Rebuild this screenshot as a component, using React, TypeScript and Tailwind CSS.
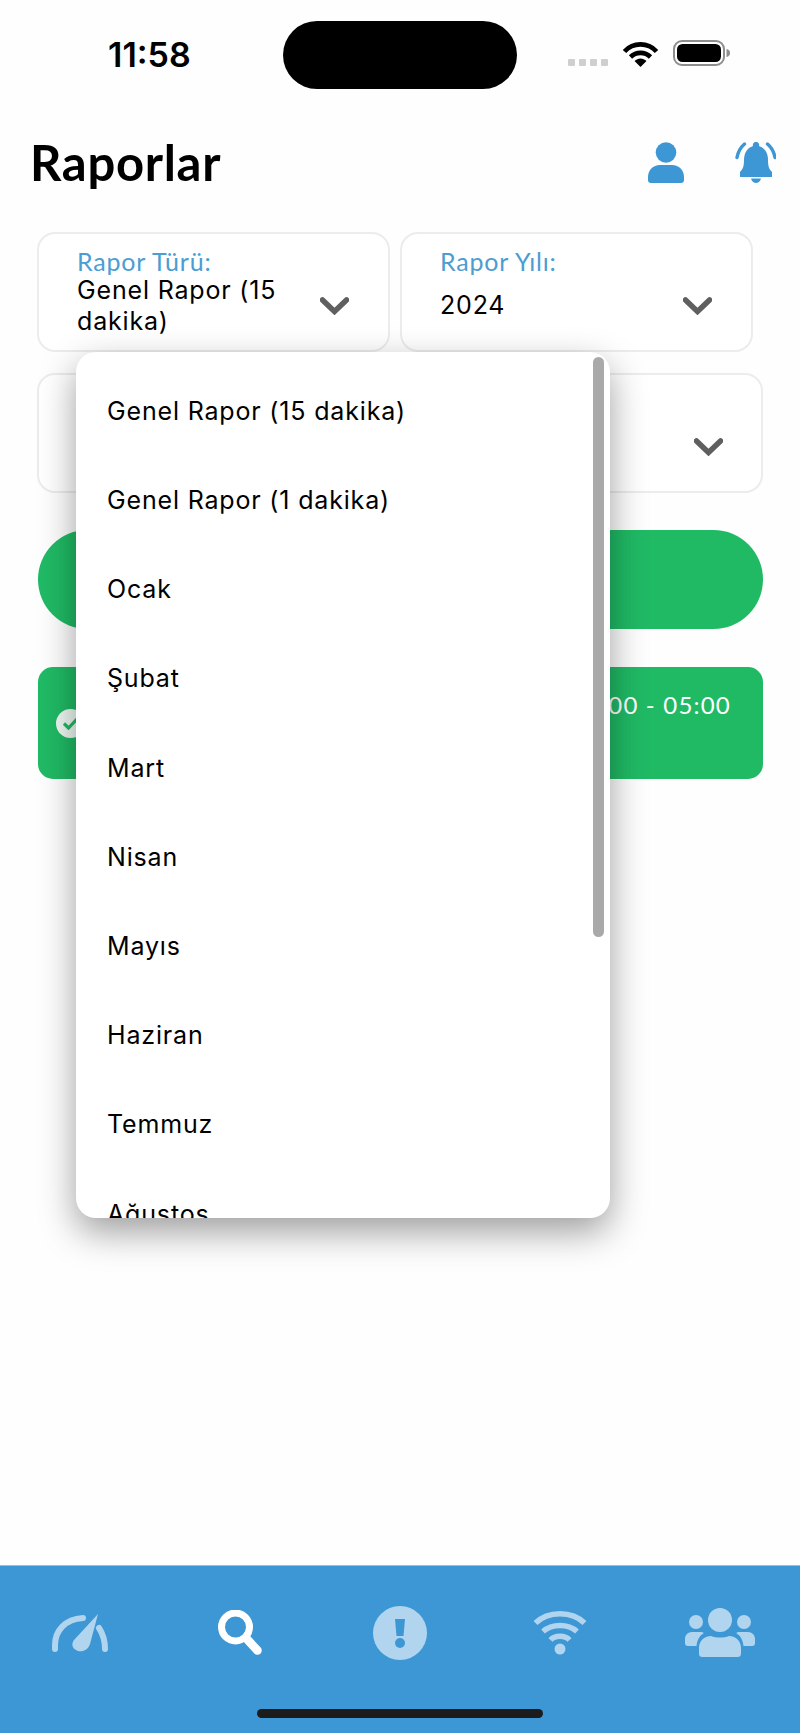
import React from 'react';

const months = [
  'Genel Rapor (15 dakika)',
  'Genel Rapor (1 dakika)',
  'Ocak',
  'Şubat',
  'Mart',
  'Nisan',
  'Mayıs',
  'Haziran',
  'Temmuz',
  'Ağustos',
];

const Chevron = () => (
  <svg width="29" height="18" viewBox="0 0 29 18" className="shrink-0 mt-[13px]">
    <path d="M2.5 3 L14.5 14.5 L26.5 3" fill="none" stroke="#5f5f5f" strokeWidth="5.5" strokeLinecap="round" />
  </svg>
);

const StatusBar = () => (
  <div className="h-[130px] flex items-start pt-[21px]">
    <div className="h-[68px] w-[175px] pl-[108px] flex items-center font-['Inter',sans-serif] text-[34px] font-semibold text-black leading-none whitespace-nowrap">
      11:58
    </div>
    <div className="ml-[108px] h-[68px] w-[234px] rounded-[34px] bg-black" />
    <div className="ml-[51px] mt-[38px] flex gap-[4px]">
      <div className="w-[7px] h-[7px] rounded-[1px] bg-[#cfcfcf]" />
      <div className="w-[7px] h-[7px] rounded-[1px] bg-[#cfcfcf]" />
      <div className="w-[7px] h-[7px] rounded-[1px] bg-[#cfcfcf]" />
      <div className="w-[7px] h-[7px] rounded-[1px] bg-[#cfcfcf]" />
    </div>
    <svg width="35" height="26" viewBox="0 0 35 26" className="ml-[15px] mt-[20px]">
      <path d="M1.5 10.5 C10 1 25 1 33.5 10.5" fill="none" stroke="#000" strokeWidth="4.6" />
      <path d="M7.5 16 C13 10.5 22 10.5 27.5 16" fill="none" stroke="#000" strokeWidth="4.6" />
      <path d="M11.5 20 C15 16.5 20 16.5 23.5 20 L17.5 26 Z" fill="#000" />
    </svg>
    <svg width="58" height="28" viewBox="0 0 58 28" className="ml-[15px] mt-[19px]">
      <rect x="1" y="1" width="50" height="24" rx="8" fill="none" stroke="#8e8e8e" strokeWidth="2" />
      <rect x="4" y="4" width="44" height="18" rx="5.5" fill="#000" />
      <path d="M53.5 9 C56 9.5 57 11 57 13 C57 15 56 16.5 53.5 17 Z" fill="#8e8e8e" />
    </svg>
  </div>
);

const UserIcon = () => (
  <svg width="36" height="41" viewBox="0 0 36 41">
    <circle cx="18" cy="10.5" r="10.3" fill="#3d97d5" />
    <path d="M12 23 H24 C31 23 36 28 36 35 V38 C36 40 35 41 33 41 H3 C1 41 0 40 0 38 V35 C0 28 5 23 12 23 Z" fill="#3d97d5" />
  </svg>
);

const BellIcon = () => (
  <svg width="41" height="41" viewBox="0 0 41 41">
    <path d="M21 0 a3 3 0 0 1 3 4 C30 6 33 11 33 18 C33 24 34 27 37 30 V35 H5 V30 C8 27 9 24 9 18 C9 11 12 6 18 4 A3 3 0 0 1 21 0 Z" fill="#3d97d5" />
    <path d="M16 36.5 H26 C25 40 23 41 21 41 C19 41 17 40 16 36.5 Z" fill="#3d97d5" />
    <path d="M9.5 2 C5.5 5.5 3 10 2 15.5" fill="none" stroke="#3d97d5" strokeWidth="3.4" strokeLinecap="round" />
    <path d="M32.5 2 C36.5 5.5 39 10 40 15.5" fill="none" stroke="#3d97d5" strokeWidth="3.4" strokeLinecap="round" />
  </svg>
);

const GaugeIcon = () => (
  <svg width="56" height="38" viewBox="0 0 56 38">
    <path d="M3 35 V31 C3 17 13 5 31 4" fill="none" stroke="#b1d5ef" strokeWidth="6" strokeLinecap="round" />
    <path d="M47 14 C51 20 53 26 53 35" fill="none" stroke="#b1d5ef" strokeWidth="6" strokeLinecap="round" />
    <path d="M46 0 L38 30 C36 36 31 38 26 37 C20 35 19 30 22 26 Z" fill="#b1d5ef" />
  </svg>
);

const SearchIcon = () => (
  <svg width="44" height="45" viewBox="0 0 44 45">
    <circle cx="17.5" cy="17" r="14" fill="none" stroke="#fff" strokeWidth="7" />
    <path d="M28 28 L39.5 40.5" stroke="#fff" strokeWidth="8.5" strokeLinecap="round" />
  </svg>
);

const AlertIcon = () => (
  <svg width="54" height="54" viewBox="0 0 54 54">
    <circle cx="27" cy="27" r="27" fill="#b1d5ef" />
    <path d="M22 13 H32 L30.5 30 H23.5 Z" fill="#3d97d5" />
    <circle cx="27" cy="37" r="5" fill="#3d97d5" />
  </svg>
);

const WifiIcon = () => (
  <svg width="54" height="45" viewBox="0 0 54 45">
    <path d="M2.5 13 C15 0.5 39 0.5 51.5 13" fill="none" stroke="#b1d5ef" strokeWidth="5.5" />
    <path d="M10 21.5 C19 13.5 35 13.5 44 21.5" fill="none" stroke="#b1d5ef" strokeWidth="5.5" />
    <path d="M17.5 30 C22 25 32 25 36.5 30" fill="none" stroke="#b1d5ef" strokeWidth="5.5" />
    <circle cx="27" cy="39" r="5.5" fill="#b1d5ef" />
  </svg>
);

const PeopleIcon = () => (
  <svg width="70" height="49" viewBox="0 0 70 49">
    <circle cx="35" cy="12" r="12" fill="#b1d5ef" />
    <circle cx="11" cy="14" r="7" fill="#b1d5ef" />
    <circle cx="59" cy="14" r="7" fill="#b1d5ef" />
    <path d="M26 28 C31 30 39 30 44 28 C51 28 56 33 56 40 V45 C56 48 55 49 52 49 H18 C15 49 14 48 14 45 V40 C14 33 19 28 26 28 Z" fill="#b1d5ef" />
    <path d="M7 24 H15 C17 24 18 24.5 19 25 C14 28 12 33 11.5 38 H3 C1 38 0 37 0 35 V31 C0 27 3 24 7 24 Z" fill="#b1d5ef" />
    <path d="M63 24 H55 C53 24 52 24.5 51 25 C56 28 58 33 58.5 38 H67 C69 38 70 37 70 35 V31 C70 27 67 24 63 24 Z" fill="#b1d5ef" />
  </svg>
);

const App: React.FC = () => {
  return (
    <div className="relative w-[800px] h-[1733px] overflow-hidden bg-[#fefefe] flex flex-col font-['Inter',sans-serif]">
      <StatusBar />

      <div className="h-[64px] pl-[30px] pr-[24px] flex items-center justify-between">
        <h1 className="font-['Lato',sans-serif] text-[49px] tracking-[0.7px] font-bold text-black leading-none">Raporlar</h1>
        <div className="flex items-center gap-[51px]">
          <UserIcon />
          <BellIcon />
        </div>
      </div>

      <div className="pt-[38px] pl-[37px] flex gap-[10px]">
        <div className="w-[353px] h-[120px] rounded-[18px] border-2 border-[#ececec] bg-white pl-[38px] pr-[39px] pt-[15px] flex items-center justify-between">
          <div className="w-[240px] h-[90px] -mt-[16px]">
            <div className="font-['Lato',sans-serif] text-[25px] tracking-[0.8px] leading-[28px] text-[#4b9dd2]">Rapor Türü:</div>
            <div className="text-[25px] leading-[31px] text-black tracking-[0.83px]">Genel Rapor (15 dakika)</div>
          </div>
          <Chevron />
        </div>
        <div className="w-[353px] h-[120px] rounded-[18px] border-2 border-[#ececec] bg-white pl-[38px] pr-[39px] pt-[15px] flex items-center justify-between">
          <div className="w-[240px] h-[90px] -mt-[16px]">
            <div className="font-['Lato',sans-serif] text-[25px] tracking-[0.8px] leading-[28px] text-[#4b9dd2]">Rapor Yılı:</div>
            <div className="mt-[15px] text-[25px] leading-[31px] text-black tracking-[0.83px]">2024</div>
          </div>
          <Chevron />
        </div>
      </div>

      <div className="pt-[21px] pl-[37px] flex gap-[10px]">
        <div className="w-[353px] h-[120px] rounded-[18px] border-2 border-[#ececec] bg-white" />
        <div className="w-[363px] h-[120px] rounded-[18px] border-2 border-[#ececec] bg-white pr-[38px] pt-[15px] flex items-center justify-end">
          <Chevron />
        </div>
      </div>

      <div className="mt-[37px] ml-[38px] mr-[37px] h-[99px] rounded-[50px] bg-[#20ba65]" />

      <div className="mt-[38px] ml-[38px] mr-[37px] h-[112px] rounded-[15px] bg-[#20ba65] pl-[18px] pr-[32px] flex items-center justify-between">
        <div className="w-[29px] h-[29px] rounded-full bg-[#eef8f2] flex items-center justify-center">
          <svg width="17" height="13" viewBox="0 0 17 13">
            <path d="M2 6.5 L6.5 11 L15 2" fill="none" stroke="#20ba65" strokeWidth="3.2" />
          </svg>
        </div>
        <div className="font-['Lato',sans-serif] text-[24px] text-white tracking-[1.2px] self-start pt-[23px] leading-[30px]">00:00 - 05:00</div>
      </div>

      <div className="flex-1" />

      <div className="h-[168px] bg-[#3d97d5] border-t border-[#8cc3e7]">
        <div className="h-[133px] grid grid-cols-5">
          <div className="flex items-center justify-center"><GaugeIcon /></div>
          <div className="flex items-center justify-center"><SearchIcon /></div>
          <div className="flex items-center justify-center"><AlertIcon /></div>
          <div className="flex items-center justify-center"><WifiIcon /></div>
          <div className="flex items-center justify-center"><PeopleIcon /></div>
        </div>
        <div className="mt-[10px] mx-auto w-[286px] h-[9px] rounded-full bg-[#1c1c1c]" />
      </div>

      {/* open select list */}
      <div className="absolute left-[76px] top-[352px] w-[534px] h-[866px] rounded-[20px] bg-white overflow-hidden shadow-[0_14px_36px_rgba(0,0,0,0.38)] z-10">
        <div className="pt-[15px] pl-[31px]">
          {months.map((m) => (
            <div key={m} className="h-[89.2px] flex items-center text-[25px] text-black tracking-[0.83px]">
              {m}
            </div>
          ))}
        </div>
        <div className="absolute left-[517px] top-[5px] w-[11px] h-[580px] rounded-full bg-[#a9a9a9]" />
      </div>
    </div>
  );
};

export default App;
